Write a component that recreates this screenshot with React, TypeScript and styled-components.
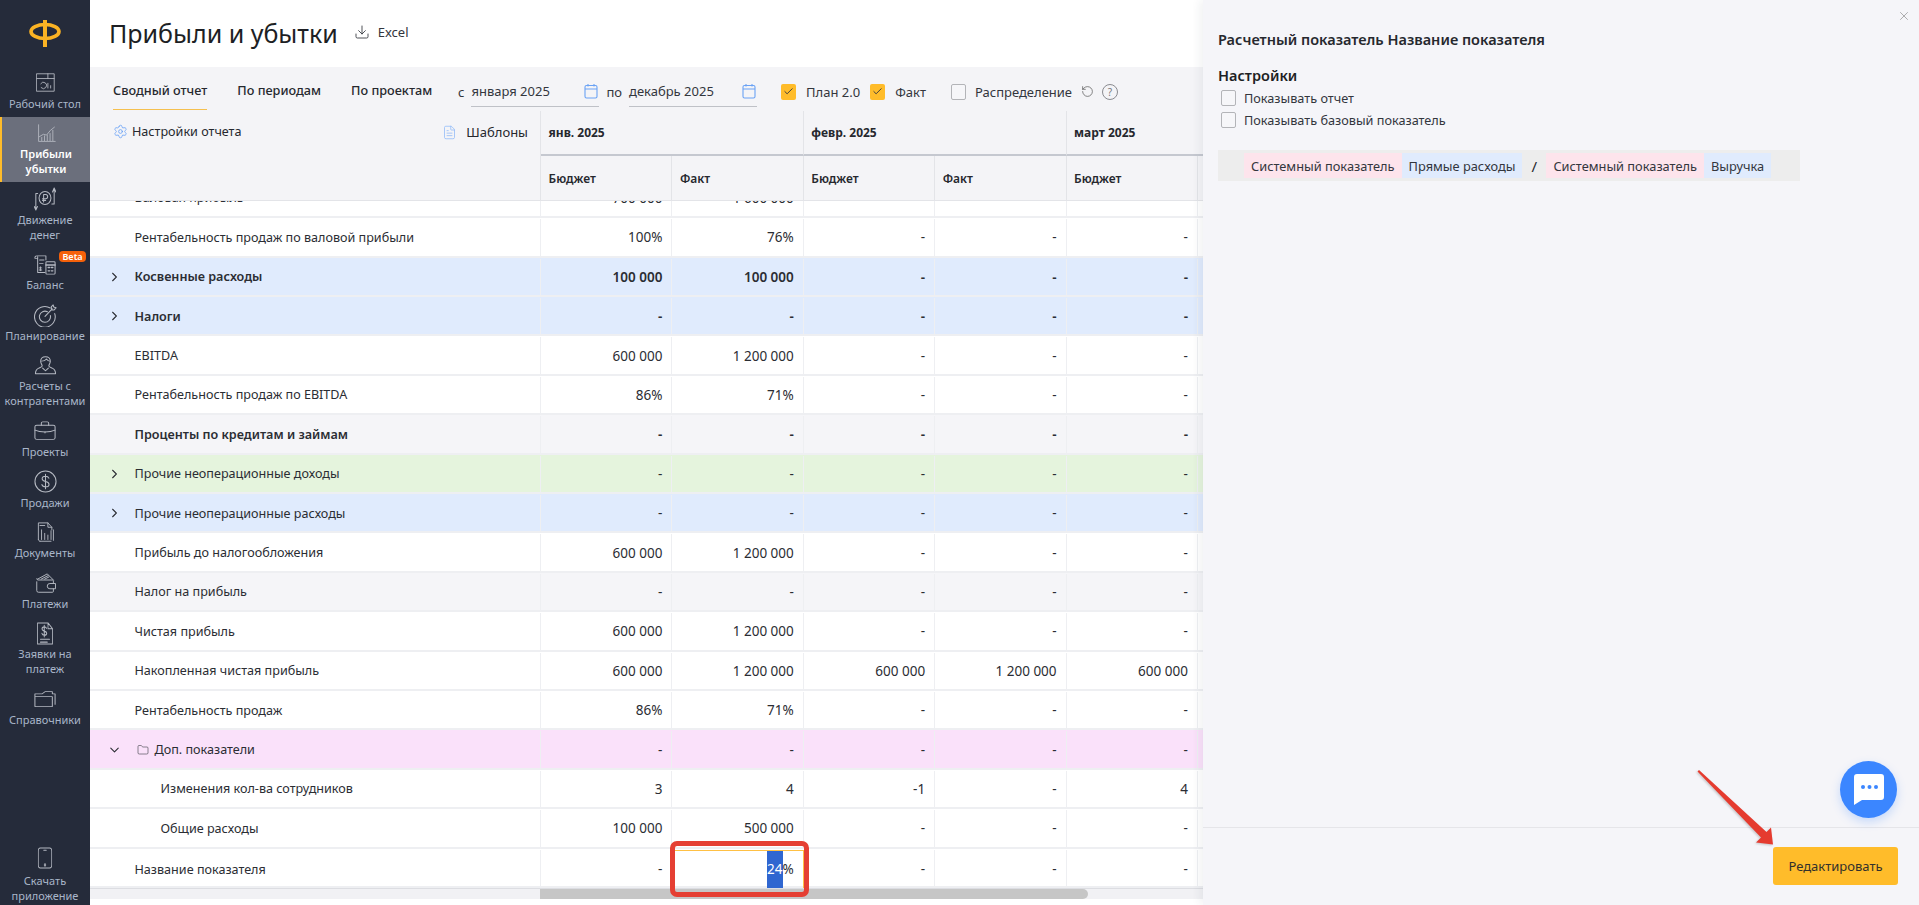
import React from "react";
import styled, { createGlobalStyle } from "styled-components";
import {
  Check,
  ChevronDown,
  ChevronRight,
  Download,
  FileText,
  Folder,
  RotateCcw,
  Settings,
  X,
} from "lucide-react";

const GlobalStyle = createGlobalStyle`
  html, body, #root {
    margin: 0;
    height: 100%;
  }
  body {
    font-family: "Noto Sans", "Liberation Sans", sans-serif;
    color: #26282e;
    background: #fff;
    overflow: hidden;
  }
`;

const Ico: React.FC<{ w: number; h: number; children: React.ReactNode }> = ({ w, h, children }) => (
  <svg width={w} height={h} viewBox="0 0 24 24" preserveAspectRatio="none" fill="none" stroke="currentColor" strokeWidth="1.1" strokeLinecap="round" strokeLinejoin="round">
    {children}
  </svg>
);

const navItems = [
  {
    lines: ["Рабочий стол"],
    icon: (
      <Ico w={19} h={19}>
        <rect x="1" y="1" width="22" height="22" />
        <path d="M1 7h22M15 1v6M6 13.5a4 4 0 1 1 .5 5M15 13v6M18.5 16v3" />
      </Ico>
    ),
  },
  {
    lines: ["Прибыли", "убытки"],
    active: true,
    icon: (
      <Ico w={19} h={19}>
        <path d="M2 1v21h21M6 21v-4M9.5 21v-6M13 21v-7M16.5 21v-9M20 21V8M3 16l5-3 4 1 5-6 5-4" />
      </Ico>
    ),
  },
  {
    lines: ["Движение", "денег"],
    icon: (
      <Ico w={22} h={24}>
        <circle cx="12" cy="11" r="6.5" />
        <path d="M10.5 15V7.5h2.3a2 2 0 0 1 0 4.2H9.3M9.3 13.4h3.4M4 6.5H2V22M.3 19.5 2 23l1.8-3.5M19.5 17H22V2M20.2 5 22 1l1.8 4" />
      </Ico>
    ),
  },
  {
    lines: ["Баланс"],
    badge: "Beta",
    icon: (
      <Ico w={22} h={20}>
        <path d="M3 1h10v5M3 1a2 2 0 0 0-2 2v1h3M4 2v19h8M6 6h5M6 10h4M7 14v5M5.5 15.5h3M5.5 18h3" />
        <rect x="13" y="8" width="10" height="15" rx="1" />
        <path d="M13 12h10M15.5 15h1.5M19 15h1.5M15.5 19h1.5M19 19h1.5" strokeWidth="1.6" />
      </Ico>
    ),
  },
  {
    lines: ["Планирование"],
    icon: (
      <Ico w={23} h={23}>
        <path d="M17 4.2A10.8 10.8 0 1 0 21.6 10M14 8.1a5.8 5.8 0 1 0 3.1 4" />
        <path d="M11.5 13 19 5M18 3l2-2 .6 2.2L23 4l-2 2.2h-2.4z" />
      </Ico>
    ),
  },
  {
    lines: ["Расчеты с", "контрагентами"],
    icon: (
      <Ico w={23} h={21}>
        <path d="M12 2c-3.5 0-5 2.2-5 5 0 2.8 1.5 4 1.5 5.5 0 1-1.5 1.500-3.500 2.500s-3.500 2.500-3.500 6.500h21c0-4-1.500-5.500-3.500-6.500s-3.500-1.500-3.500-2.500C15.500 11 17 9.800 17 7c0-2.800-1.500-5-5-5z" />
        <path d="M8 7c2 0 4-1 5-2.500C14 6 15 7 16.500 7M9 15l3 3 3-3" />
      </Ico>
    ),
  },
  {
    lines: ["Проекты"],
    icon: (
      <Ico w={22} h={20}>
        <rect x="1" y="5" width="22" height="17" rx="2" />
        <path d="M8 5V2.500A1.500 1.500 0 0 1 9.500 1h5A1.500 1.500 0 0 1 16 2.500V5M1 11c6 3 16 3 22 0M12 12.500v2" />
      </Ico>
    ),
  },
  {
    lines: ["Продажи"],
    icon: (
      <Ico w={23} h={23}>
        <circle cx="12" cy="12" r="11" />
        <path d="M15.500 8.500c-.5-1.500-2-2-3.500-2-2 0-3.500 1-3.500 2.700 0 3.800 7.200 2 7.200 5.800 0 1.700-1.700 2.500-3.700 2.500-1.800 0-3.300-.8-3.700-2.300M12 4.500v15" />
      </Ico>
    ),
  },
  {
    lines: ["Документы"],
    icon: (
      <Ico w={19} h={21}>
        <path d="M3 20V1h12l5 5v3M15 1v5h5M5 22h14M3 20c0 1 1 2 2 2" />
        <path d="M7 20V9M11 20v-7M15 20v-5M19 20V10M22 21V9M5 4h6" />
      </Ico>
    ),
  },
  {
    lines: ["Платежи"],
    icon: (
      <Ico w={21} h={21}>
        <path d="M2 10v10a2 2 0 0 0 2 2h16a1 1 0 0 0 1-1v-3M21 12V9a1 1 0 0 0-1-1H3.500A1.500 1.500 0 0 1 2 6.500" />
        <path d="M3 7 14 1l7 7M7 7l8-4M11 7l5-2.500" />
        <path d="M23 12h-6a3 3 0 0 0 0 6h6z" />
      </Ico>
    ),
  },
  {
    lines: ["Заявки на", "платеж"],
    icon: (
      <Ico w={18} h={23}>
        <path d="M2 1h14l6 6v16H2zM16 1v6h6" />
        <path d="M14 6.500C13.500 5.500 12.500 5 11 5 9.500 5 8 5.800 8 7.300c0 2.800 6.300 1.500 6.300 4.400 0 1.300-1.300 2-3.100 2-1.700 0-3-.7-3.300-1.900M11 3.500V15.500M6 18h12M6 21h9" strokeWidth="1.300" />
      </Ico>
    ),
  },
  {
    lines: ["Справочники"],
    icon: (
      <Ico w={22} h={17}>
        <path d="M1 22V4h8l3-3h8v3M1 8h19v14H1M20 4h3v15" />
      </Ico>
    ),
  },
];

const tableRows: { name: string; values: string[]; tone?: string; bold?: boolean; arrow?: "right" | "down"; folder?: boolean; level?: number; selected?: boolean }[] = [
  { name: "Валовая прибыль", values: ["700 000", "1 600 000", "-", "-", "-"] },
  { name: "Рентабельность продаж по валовой прибыли", values: ["100%", "76%", "-", "-", "-"] },
  { name: "Косвенные расходы", values: ["100 000", "100 000", "-", "-", "-"], tone: "#e0ebfd", bold: true, arrow: "right" },
  { name: "Налоги", values: ["-", "-", "-", "-", "-"], tone: "#e0ebfd", bold: true, arrow: "right" },
  { name: "EBITDA", values: ["600 000", "1 200 000", "-", "-", "-"] },
  { name: "Рентабельность продаж по EBITDA", values: ["86%", "71%", "-", "-", "-"] },
  { name: "Проценты по кредитам и займам", values: ["-", "-", "-", "-", "-"], tone: "#f5f5f8", bold: true },
  { name: "Прочие неоперационные доходы", values: ["-", "-", "-", "-", "-"], tone: "#e5f4dd", arrow: "right" },
  { name: "Прочие неоперационные расходы", values: ["-", "-", "-", "-", "-"], tone: "#e0ebfd", arrow: "right" },
  { name: "Прибыль до налогообложения", values: ["600 000", "1 200 000", "-", "-", "-"] },
  { name: "Налог на прибыль", values: ["-", "-", "-", "-", "-"], tone: "#f5f5f8" },
  { name: "Чистая прибыль", values: ["600 000", "1 200 000", "-", "-", "-"] },
  { name: "Накопленная чистая прибыль", values: ["600 000", "1 200 000", "600 000", "1 200 000", "600 000"] },
  { name: "Рентабельность продаж", values: ["86%", "71%", "-", "-", "-"] },
  { name: "Доп. показатели", values: ["-", "-", "-", "-", "-"], tone: "#fae1fa", arrow: "down", folder: true },
  { name: "Изменения кол-ва сотрудников", values: ["3", "4", "-1", "-", "4"], level: 1 },
  { name: "Общие расходы", values: ["100 000", "500 000", "-", "-", "-"], level: 1 },
  { name: "Название показателя", values: ["-", "", "-", "-", "-"], selected: true },
];

const Calendar = () => (
  <svg width="14" height="16" viewBox="0 0 14 16" fill="none" stroke="#6aa2f5" strokeWidth="1.1">
    <rect x="1" y="2.500" width="12" height="12.500" rx="1.500" />
    <path d="M1 6h12M4 1v2.500M10 1v2.500" />
  </svg>
);

export default function App() {
  return (
    <Page>
      <GlobalStyle />
      <Sidebar>
        <Logo>
          <svg width="34" height="30" viewBox="0 0 34 30" fill="none" stroke="#fbb324" strokeWidth="3.600">
            <ellipse cx="17" cy="12.500" rx="14" ry="7" />
            <path d="M17 1v27" strokeWidth="4" />
          </svg>
        </Logo>
        {navItems.map((item) => (
          <NavItem key={item.lines[0]} $active={item.active}>
            <NavIcon>{item.icon}</NavIcon>
            {item.lines.map((line) => (
              <NavLine key={line}>{line}</NavLine>
            ))}
            {item.badge && <Badge>{item.badge}</Badge>}
          </NavItem>
        ))}
        <NavItem $bottom>
          <NavIcon $tall>
            <Ico w={16} h={22}>
              <rect x="2" y="1" width="20" height="22" rx="3" />
              <path d="M10 3.500h4" />
              <circle cx="12" cy="19.500" r="1.200" />
            </Ico>
          </NavIcon>
          <NavLine>Скачать</NavLine>
          <NavLine>приложение</NavLine>
        </NavItem>
      </Sidebar>

      <Main>
        <TitleBar>
          <Title>Прибыли и убытки</Title>
          <ExcelLink>
            <Download size={16} strokeWidth={1.3} />
            Excel
          </ExcelLink>
        </TitleBar>

        <Toolbar>
          <Tabs>
            <Tab $active>Сводный отчет</Tab>
            <Tab>По периодам</Tab>
            <Tab>По проектам</Tab>
          </Tabs>
          <DateLabel>с</DateLabel>
          <DateField>
            января 2025
            <Calendar />
          </DateField>
          <DateLabel>по</DateLabel>
          <DateField>
            декабрь 2025
            <Calendar />
          </DateField>
          <CheckLabel>
            <Box $checked>
              <Check size={11} strokeWidth={2} />
            </Box>
            План 2.0
          </CheckLabel>
          <CheckLabel>
            <Box $checked>
              <Check size={11} strokeWidth={2} />
            </Box>
            Факт
          </CheckLabel>
          <CheckLabel $wide>
            <Box />
            Распределение
          </CheckLabel>
          <RotateCcw size={13} strokeWidth={1.3} color="#555" />
          <Help>?</Help>
        </Toolbar>

        <HeadGrid>
          <HeadLeft>
            <HeadAction>
              <Settings size={15} strokeWidth={1.2} color="#5f9bf5" />
              Настройки отчета
            </HeadAction>
            <HeadAction>
              <FileText size={15} strokeWidth={1.2} color="#8db8f8" />
              <span>Шаблоны</span>
            </HeadAction>
          </HeadLeft>
          <MonthCell>янв. 2025</MonthCell>
          <MonthCell>февр. 2025</MonthCell>
          <MonthCell>март 2025</MonthCell>
          <SubCell>Бюджет</SubCell>
          <SubCell>Факт</SubCell>
          <SubCell>Бюджет</SubCell>
          <SubCell>Факт</SubCell>
          <SubCell>Бюджет</SubCell>
          <SubCell />
        </HeadGrid>

        <TableBody>
          {tableRows.map((row) => (
            <Row key={row.name} $tone={row.tone}>
              <NameCell $bold={row.bold} $level={row.level}>
                {row.arrow && (
                  <Arrow>{row.arrow === "right" ? <ChevronRight size={15} strokeWidth={1.7} /> : <ChevronDown size={15} strokeWidth={1.7} />}</Arrow>
                )}
                {row.folder && <Folder size={12} strokeWidth={1.1} />}
                {row.name}
              </NameCell>
              {row.values.map((value, i) =>
                row.selected && i === 1 ? (
                  <ActiveCell key={i}>
                    <Selected>24</Selected>%
                  </ActiveCell>
                ) : (
                  <ValueCell key={i} $bold={row.bold}>
                    {value}
                  </ValueCell>
                ),
              )}
              <ValueCell />
            </Row>
          ))}
        </TableBody>

        <ScrollTrack>
          <ScrollThumb />
        </ScrollTrack>
      </Main>

      <Panel>
        <CloseBtn>
          <X size={14} strokeWidth={1} />
        </CloseBtn>
        <PanelBody>
          <PanelTitle>Расчетный показатель Название показателя</PanelTitle>
          <PanelHeading>Настройки</PanelHeading>
          <PanelCheck>
            <Box />
            Показывать отчет
          </PanelCheck>
          <PanelCheck>
            <Box />
            Показывать базовый показатель
          </PanelCheck>
          <Formula>
            <Chip $color="#fde4ec">Системный показатель</Chip>
            <Chip $color="#e0ebfd">Прямые расходы</Chip>
            <Slash>/</Slash>
            <Chip $color="#fde4ec">Системный показатель</Chip>
            <Chip $color="#e0ebfd">Выручка</Chip>
          </Formula>
        </PanelBody>
        <PanelFooter>
          <EditButton>Редактировать</EditButton>
        </PanelFooter>
      </Panel>

      <ChatButton>
        <svg width="30" height="31" viewBox="0 0 30 31">
          <path d="M3 0h24a3 3 0 0 1 3 3v20a3 3 0 0 1-3 3H8l-8 5V3a3 3 0 0 1 3-3z" fill="#fff" />
          <circle cx="9" cy="13" r="2" fill="#3b86ff" />
          <circle cx="15.500" cy="13" r="2" fill="#3b86ff" />
          <circle cx="22" cy="13" r="2" fill="#3b86ff" />
        </svg>
      </ChatButton>

      <RedFrame />
      <RedArrow width="80" height="80" viewBox="0 0 80 80">
        <path d="M1.500 2.500 L3 1 L70.500 63 L75 58.500 L77 75.500 L60 73.500 L65 68.500 Z" fill="#e53b2f" />
      </RedArrow>
    </Page>
  );
}

const Page = styled.div`
  position: relative;
  display: flex;
  width: 1919px;
  height: 905px;
  overflow: hidden;
`;

const Sidebar = styled.nav`
  flex: none;
  width: 90px;
  display: flex;
  flex-direction: column;
  background: #252b3a;
  color: #a9b6c9;
`;

const Logo = styled.div`
  height: 66px;
  display: flex;
  align-items: flex-start;
  justify-content: center;
  padding-top: 19px;
  box-sizing: border-box;
`;

const NavItem = styled.div<{ $active?: boolean; $bottom?: boolean }>`
  position: relative;
  display: flex;
  flex-direction: column;
  align-items: center;
  padding: 4px 0 6.100px;
  ${(p) => (p.$bottom ? "margin-top: auto; padding-bottom: 2px;" : "")}
  background: ${(p) => (p.$active ? "#6b6f7c" : "transparent")};
  border-left: ${(p) => (p.$active ? "2px solid #ffbc2a" : "none")};
  color: ${(p) => (p.$active ? "#fff" : "inherit")};
  font-weight: ${(p) => (p.$active ? 600 : 400)};
  box-sizing: border-box;
`;

const NavIcon = styled.div<{ $tall?: boolean }>`
  height: ${(p) => (p.$tall ? "30px" : "25.500px")};
  display: flex;
  align-items: center;
  justify-content: center;
  color: #b5b9c2;
`;

const NavLine = styled.div`
  font-size: 11px;
  line-height: 15px;
  white-space: nowrap;
`;

const Badge = styled.span`
  position: absolute;
  top: 3px;
  left: 59px;
  width: 27px;
  height: 11px;
  border-radius: 4px;
  background: #f5610a;
  color: #fff;
  font-size: 9px;
  font-weight: 600;
  line-height: 11px;
  text-align: center;
`;

const Main = styled.main`
  flex: 1;
  min-width: 0;
  display: flex;
  flex-direction: column;
  overflow: hidden;
`;

const TitleBar = styled.header`
  height: 67px;
  flex: none;
  display: flex;
  align-items: center;
  padding: 0 0 2px 19px;
  gap: 16px;
  box-sizing: border-box;
  background: #fff;
`;

const Title = styled.h1`
  margin: 0;
  font-size: 25px;
  font-weight: 400;
  color: #1d1f24;
`;

const ExcelLink = styled.a`
  display: flex;
  align-items: center;
  gap: 8px;
  font-size: 13px;
  color: #33363d;
  margin-bottom: 2px;
`;

const Toolbar = styled.div`
  height: 44px;
  flex: none;
  display: flex;
  align-items: center;
  padding: 5px 0 0 23px;
  background: #f4f4f7;
  font-size: 13px;
  box-sizing: border-box;
`;

const Tabs = styled.div`
  width: 345px;
  flex: none;
  display: flex;
  gap: 30px;
  align-self: stretch;
  margin-top: -5px;
`;

const Tab = styled.div<{ $active?: boolean }>`
  height: 43px;
  line-height: 47px;
  font-weight: 500;
  font-size: 12.700px;
  white-space: nowrap;
  color: #26282e;
  box-sizing: border-box;
  border-bottom: 1px solid ${(p) => (p.$active ? "#f5c04f" : "transparent")};
`;

const DateLabel = styled.span`
  margin-right: 7px;
  color: #33363d;
`;

const DateField = styled.div`
  width: 128px;
  height: 31px;
  margin-right: 7px;
  display: flex;
  align-items: center;
  justify-content: space-between;
  box-sizing: border-box;
  padding-right: 1px;
  border-bottom: 1px solid #bfc1c7;
  color: #33363d;
`;

const CheckLabel = styled.label<{ $wide?: boolean }>`
  display: flex;
  align-items: center;
  gap: ${(p) => (p.$wide ? "9px" : "10px")};
  color: #33363d;
  margin-left: ${(p) => (p.$wide ? "25px" : "10px")};
  margin-right: ${(p) => (p.$wide ? "9px" : "0")};
  white-space: nowrap;
  &:first-of-type {
    margin-left: 17px;
  }
`;

const Box = styled.span<{ $checked?: boolean }>`
  flex: none;
  width: 15px;
  height: 16px;
  display: inline-flex;
  align-items: center;
  justify-content: center;
  border-radius: 2px;
  box-sizing: border-box;
  color: #33363d;
  background: ${(p) => (p.$checked ? "#ffbc2a" : "#f6f6f9")};
  border: ${(p) => (p.$checked ? "none" : "1.500px solid #b3b4b8")};
`;

const Help = styled.span`
  width: 14px;
  height: 14px;
  margin-left: 8px;
  border: 1px solid #8a8b90;
  border-radius: 50%;
  font-size: 10px;
  line-height: 14px;
  text-align: center;
  color: #77787d;
`;

const COLUMNS = "451px repeat(6, 131.400px)";

const HeadGrid = styled.div`
  flex: none;
  display: grid;
  grid-template-columns: ${COLUMNS};
  grid-template-rows: 45px 45px;
  background: #f4f4f7;
  border-bottom: 1px solid #e3e4e8;
  height: 90px;
  box-sizing: border-box;
`;

const HeadLeft = styled.div`
  grid-row: 1 / span 2;
  display: flex;
  align-items: flex-start;
  justify-content: space-between;
  padding: 12px 12px 0 23px;
  border-right: 1px solid #e3e4e8;
`;

const HeadAction = styled.div`
  display: flex;
  align-items: center;
  gap: 4px;
  font-size: 12.600px;
  color: #26282e;
  & > span {
    margin-left: 5px;
    font-size: 13px;
  }
`;

const MonthCell = styled.div`
  grid-column: span 2;
  display: flex;
  align-items: center;
  padding-left: 7.500px;
  font-size: 12px;
  font-weight: 700;
  border-right: 1px solid #e3e4e8;
  border-bottom: 2px solid #c5c8d0;
  box-sizing: border-box;
`;

const SubCell = styled.div`
  display: flex;
  align-items: center;
  padding-left: 7.500px;
  font-size: 12px;
  font-weight: 600;
  border-right: 1px solid #e3e4e8;
`;

const TableBody = styled.div`
  height: 687px;
  flex: none;
  display: flex;
  flex-direction: column;
  justify-content: flex-end;
  overflow: hidden;
`;

const Row = styled.div<{ $tone?: string }>`
  flex: none;
  height: 39.410px;
  display: grid;
  grid-template-columns: ${COLUMNS};
  padding-top: 1px;
  box-sizing: border-box;
  background: ${(p) => p.$tone ?? "#fff"};
  border-bottom: 2px solid #eeeff2;
  color: #2b2d33;
`;

const NameCell = styled.div<{ $bold?: boolean; $level?: number }>`
  display: flex;
  align-items: center;
  position: relative;
  gap: 6px;
  padding-left: ${(p) => 44.500 + (p.$level ?? 0) * 26}px;
  font-size: 12.600px;
  font-weight: ${(p) => (p.$bold ? 600 : 400)};
  border-right: 1px solid #eeeff2;
  white-space: nowrap;
  & > svg {
    margin-left: 2px;
  }
`;

const Arrow = styled.span`
  position: absolute;
  left: 17px;
  top: 50%;
  height: 15px;
  transform: translateY(-50%);
`;

const ValueCell = styled.div<{ $bold?: boolean }>`
  display: flex;
  align-items: center;
  justify-content: flex-end;
  padding-right: 9px;
  font-size: 13.500px;
  font-weight: ${(p) => (p.$bold ? 600 : 400)};
  border-right: 1px solid #eeeff2;
`;

const ActiveCell = styled(ValueCell)`
  align-items: stretch;
  line-height: 37px;
  border-top: 1px solid #ffc044;
  border-bottom: 1px solid #ffc044;
  border-right: 1px solid #ffc044;
`;

const Selected = styled.span`
  background: #2f66d0;
  color: #fff;
`;

const ScrollTrack = styled.div`
  height: 11px;
  flex: none;
  margin-right: 716px;
  background: #f1f1f4;
  border-top: 1px solid #dcdde2;
  box-sizing: border-box;
  padding-left: 450px;
`;

const ScrollThumb = styled.div`
  width: 548px;
  height: 100%;
  border-radius: 0 5px 5px 0;
  background: #c6c6c6;
`;

const Panel = styled.aside`
  position: absolute;
  top: 0;
  right: 0;
  bottom: 0;
  width: 716px;
  display: flex;
  flex-direction: column;
  background: #f5f5f9;
  box-shadow: -4px 0 8px rgba(40, 44, 60, 0.06);
  font-size: 13px;
`;

const CloseBtn = styled.span`
  position: absolute;
  top: 9px;
  right: 8px;
  color: #777;
`;

const PanelBody = styled.div`
  flex: 1;
  padding: 30px 0 0 15px;
`;

const PanelTitle = styled.div`
  font-size: 14.500px;
  font-weight: 600;
  line-height: 19px;
  color: #26282e;
`;

const PanelHeading = styled.div`
  margin-top: 16px;
  margin-bottom: 2px;
  font-size: 14.500px;
  font-weight: 600;
  line-height: 20px;
  color: #1d1f24;
`;

const PanelCheck = styled.label`
  display: flex;
  align-items: center;
  gap: 8px;
  height: 22px;
  padding-left: 3px;
  font-size: 12.700px;
  color: #33363d;
`;

const Formula = styled.div`
  width: 582px;
  height: 31px;
  margin-top: 19px;
  padding: 3px 0 3px 26px;
  display: flex;
  align-items: stretch;
  box-sizing: border-box;
  background: #ededed;
  font-size: 12.800px;
`;

const Chip = styled.span<{ $color: string }>`
  display: flex;
  align-items: center;
  padding: 0 7px;
  white-space: nowrap;
  background: ${(p) => p.$color};
  color: #33363d;
`;

const Slash = styled.span`
  width: 24px;
  font-size: 15px;
  text-align: center;
  line-height: 27px;
`;

const PanelFooter = styled.footer`
  height: 78px;
  flex: none;
  display: flex;
  justify-content: flex-end;
  align-items: flex-start;
  padding: 19px 21px 0 0;
  box-sizing: border-box;
  border-top: 1px solid #e5e5e9;
`;

const EditButton = styled.button`
  width: 125px;
  height: 38px;
  border: none;
  border-radius: 3px;
  background: #ffbc2a;
  font-family: inherit;
  font-size: 13px;
  color: #33312c;
`;

const ChatButton = styled.div`
  position: absolute;
  left: 1840px;
  top: 761px;
  width: 57px;
  height: 57px;
  display: flex;
  align-items: center;
  justify-content: center;
  border-radius: 50%;
  background: #3b86ff;
  box-shadow: 0 4px 10px rgba(59, 134, 255, 0.25);
`;

const RedFrame = styled.div`
  position: absolute;
  left: 670px;
  top: 841px;
  width: 139px;
  height: 56px;
  border: 5px solid #e53f33;
  border-radius: 7px;
  box-sizing: border-box;
`;

const RedArrow = styled.svg`
  position: absolute;
  left: 1696px;
  top: 769px;
  filter: drop-shadow(-1px 1px 1px rgba(0, 0, 0, 0.2));
`;
